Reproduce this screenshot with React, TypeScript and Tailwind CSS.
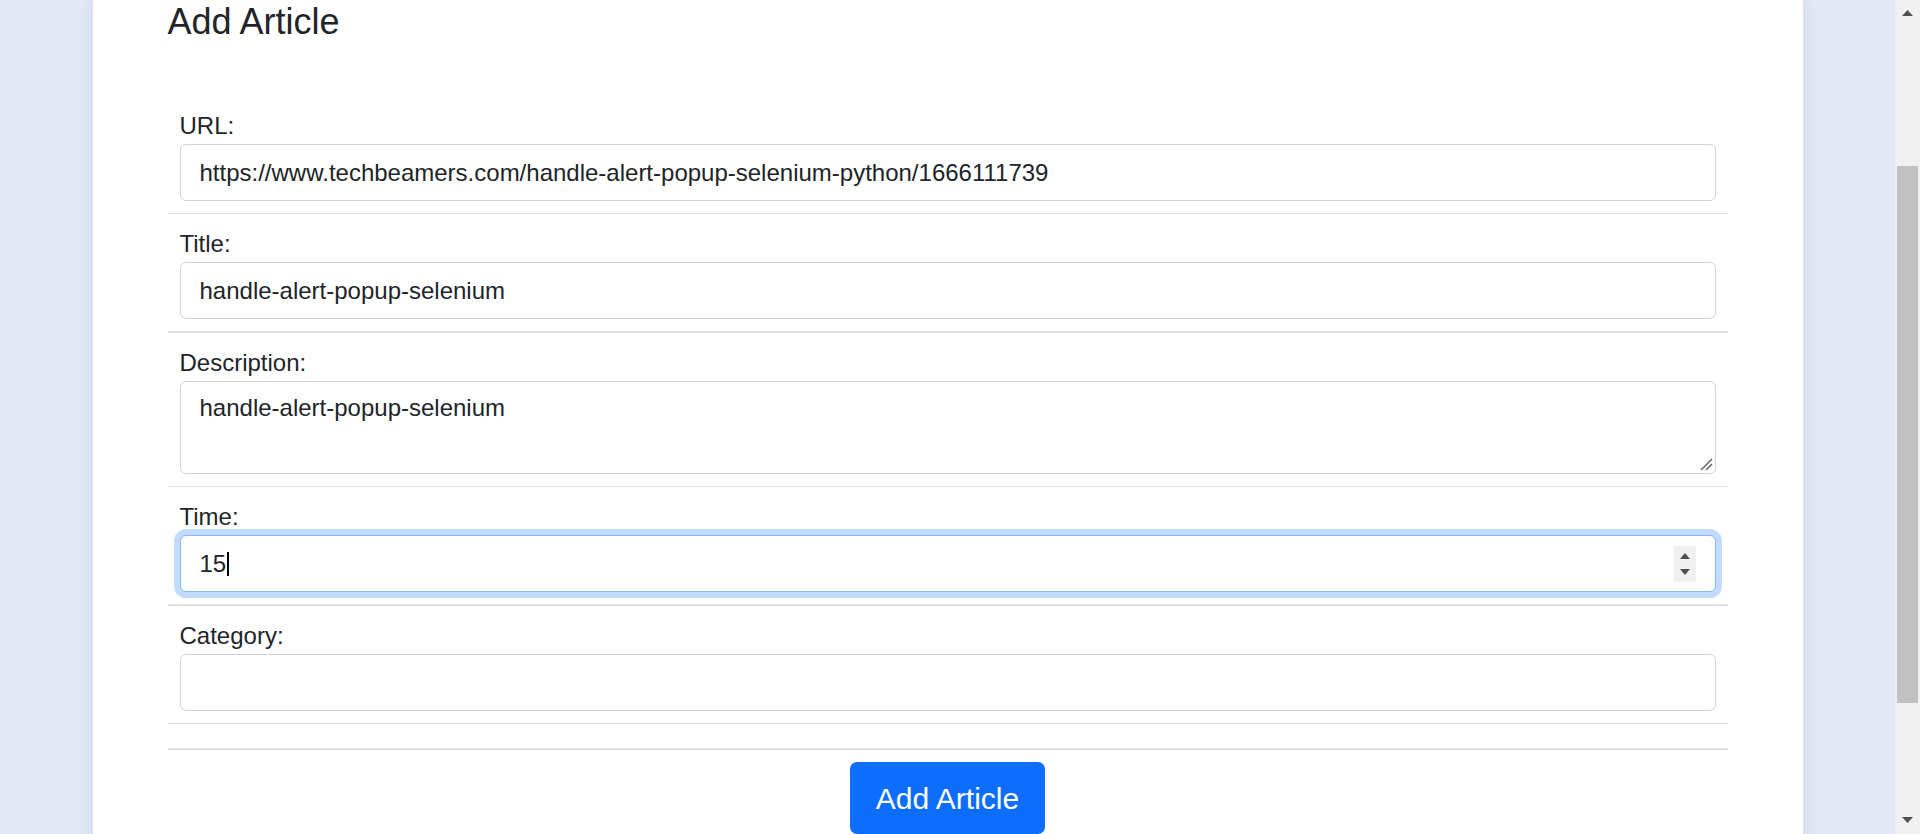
import React from 'react';

const font = { fontFamily: '"Liberation Sans", Arial, sans-serif' };

function Row({ label, children, thick }: { label: string; children: React.ReactNode; thick?: boolean }) {
  return (
    <div className={`px-3 py-3 ${thick ? 'border-b-2' : 'border-b'} border-[#dee2e6]`}>
      <label className="block text-[24px] leading-[36px] text-[#212529]">{label}</label>
      {children}
    </div>
  );
}

const inputCls =
  'block w-full h-[57px] rounded-[6px] border border-[#ced4da] bg-white pl-[19px] pr-[19px] text-[24px] text-[#212529] outline-none';

function Spinner() {
  return (
    <div className="flex h-[36px] w-[22px] flex-col items-center justify-center gap-[10px] bg-[#f0f0f0]">
      <svg width="10" height="6" viewBox="0 0 10 6">
        <path d="M5 0L10 6H0Z" fill="#505050" />
      </svg>
      <svg width="10" height="6" viewBox="0 0 10 6">
        <path d="M0 0H10L5 6Z" fill="#505050" />
      </svg>
    </div>
  );
}

export default function App() {
  return (
    <div className="flex h-[834px] w-full overflow-hidden bg-[#e2e8f4]" style={font}>
      <div className="flex flex-1 justify-center">
        <div className="h-[900px] w-[1710px] bg-white px-[75px] shadow-[0_0_12px_rgba(70,90,160,0.14)]">
          <h4 className="text-[36px] font-medium leading-[43px] text-[#212529]">Add Article</h4>

          <form className="mt-[53px]" onSubmit={(e) => e.preventDefault()}>
            <Row label="URL:">
              <input
                className={inputCls}
                readOnly
                value="https://www.techbeamers.com/handle-alert-popup-selenium-python/1666111739"
              />
            </Row>
            <Row label="Title:" thick>
              <input className={inputCls} readOnly value="handle-alert-popup-selenium" />
            </Row>
            <Row label="Description:">
              <div className="relative">
                <textarea
                  className="block h-[93px] w-full resize-none rounded-[6px] border border-[#ced4da] bg-white px-[19px] pt-[8px] text-[24px] leading-[36px] text-[#212529] outline-none"
                  readOnly
                  value="handle-alert-popup-selenium"
                />
                <svg className="absolute bottom-[3px] right-[3px]" width="13" height="13" viewBox="0 0 13 13">
                  <path d="M1 12L12 1M6 12L12 6" stroke="#6b6b6b" strokeWidth="1.6" />
                </svg>
              </div>
            </Row>
            <Row label="Time:" thick>
              <div className="flex h-[57px] w-full items-center rounded-[6px] border border-[#86b7fe] bg-white pl-[19px] pr-[19px] text-[24px] text-[#212529] shadow-[0_0_0_6px_#c2dbfe]">
                <span>15</span>
                <span className="ml-[1px] h-[24px] w-[2px] bg-black" />
                <div className="flex-1" />
                <Spinner />
              </div>
            </Row>
            <Row label="Category:">
              <input className={inputCls} readOnly value="" />
            </Row>
            <div className="h-[26px] border-b-2 border-[#dee2e6]" />
            <div className="flex justify-center pt-3">
              <button
                type="submit"
                className="h-[72px] rounded-[7px] bg-[#0d6efd] px-[26px] text-[30px] leading-[45px] text-white"
              >
                Add Article
              </button>
            </div>
          </form>
        </div>
      </div>

      {/* fake browser scrollbar */}
      <div className="flex w-[25px] flex-col items-center bg-[#f1f1f1]">
        <svg className="mt-[10px]" width="11" height="6" viewBox="0 0 11 6">
          <path d="M5.5 0L11 6H0Z" fill="#505050" />
        </svg>
        <div className="mt-[150px] h-[537px] w-[21px] bg-[#c1c1c1]" />
        <div className="flex-1" />
        <svg className="mb-[11px]" width="11" height="6" viewBox="0 0 11 6">
          <path d="M0 0H11L5.5 6Z" fill="#505050" />
        </svg>
      </div>
    </div>
  );
}
